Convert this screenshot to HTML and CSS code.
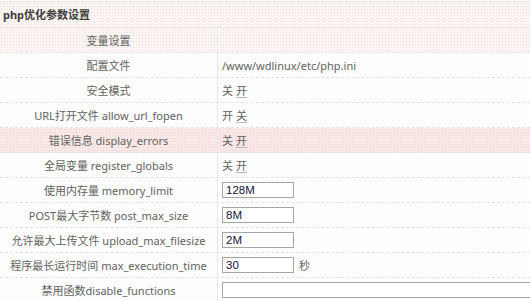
FILE: index.html
```html
<!DOCTYPE html>
<html>
<head>
<meta charset="utf-8">
<link rel="stylesheet" href="styles.css">
</head>
<body>
<div class="panel">
  <div class="title">php优化参数设置</div>
  <div class="row pink">
    <div class="label">变量设置</div>
    <div class="value"></div>
  </div>
  <div class="row">
    <div class="label">配置文件</div>
    <div class="value">/www/wdlinux/etc/php.ini</div>
  </div>
  <div class="row">
    <div class="label">安全模式</div>
    <div class="value">关 <span class="link">开</span></div>
  </div>
  <div class="row">
    <div class="label">URL打开文件 allow_url_fopen</div>
    <div class="value">开 <span class="link">关</span></div>
  </div>
  <div class="row hot">
    <div class="label">错误信息 display_errors</div>
    <div class="value">关 <span class="link">开</span></div>
  </div>
  <div class="row">
    <div class="label">全局变量 register_globals</div>
    <div class="value">关 <span class="link">开</span></div>
  </div>
  <div class="row">
    <div class="label">使用内存量 memory_limit</div>
    <div class="value"><input class="field" type="text" value="128M"></div>
  </div>
  <div class="row">
    <div class="label">POST最大字节数 post_max_size</div>
    <div class="value"><input class="field" type="text" value="8M"></div>
  </div>
  <div class="row">
    <div class="label">允许最大上传文件 upload_max_filesize</div>
    <div class="value"><input class="field" type="text" value="2M"></div>
  </div>
  <div class="row">
    <div class="label">程序最长运行时间 max_execution_time</div>
    <div class="value"><input class="field" type="text" value="30"><span class="unit">秒</span></div>
  </div>
  <div class="row">
    <div class="label">禁用函数disable_functions</div>
    <div class="value"><input class="field wide" type="text" value=""></div>
  </div>
</div>
</body>
</html>
```
FILE: styles.css
```css
html, body {
  margin: 0;
  padding: 0;
  background: #fcfdfc;
  overflow: hidden;
}
body {
  font-family: "Noto Sans", "Noto Sans CJK SC", sans-serif;
  font-size: 11px;
  color: #636363;
}
.panel {
  padding-top: 1px;
}
.title {
  height: 25px;
  line-height: 25px;
  padding-left: 3px;
  font-weight: bold;
  color: #3f3f3f;
  font-size: 11px;
  border-top: 1px dotted #e6dcdc;
  border-bottom: 1px dotted #e6dcdc;
  background-color: #fbf5f4;
  background-image: radial-gradient(#f1dcd8 0.7px, transparent 0.8px);
  background-size: 3px 3px;
}
.row {
  display: grid;
  grid-template-columns: 218px 1fr;
  height: 24px;
  border-bottom: 1px dashed #e2e4ea;
}
.row.pink {
  background-color: #fbf5f4;
  background-image: radial-gradient(#f1dcd8 0.7px, transparent 0.8px);
  background-size: 3px 3px;
}
.row.hot {
  background-color: #f9e8e5;
  background-image: radial-gradient(#efd6d1 0.7px, transparent 0.8px);
  background-size: 3px 3px;
}
.label {
  display: flex;
  align-items: center;
  justify-content: center;
  border-right: 1px solid #e3e7ef;
  white-space: nowrap;
}
.value {
  display: flex;
  align-items: center;
  padding-left: 4px;
  white-space: nowrap;
}
.link {
  margin-left: 3px;
  text-decoration: underline;
  text-decoration-color: #b9b9b9;
  text-underline-offset: 2px;
}
.field {
  box-sizing: border-box;
  width: 72px;
  height: 16px;
  margin: 0;
  padding: 0 3px;
  border: 1px solid #a6a6a6;
  background: #fff;
  font-family: "Liberation Sans", Arial, sans-serif;
  font-size: 11.5px;
  color: #14143a;
}
.field.wide {
  width: 320px;
}
.unit {
  margin-left: 5px;
}
```
